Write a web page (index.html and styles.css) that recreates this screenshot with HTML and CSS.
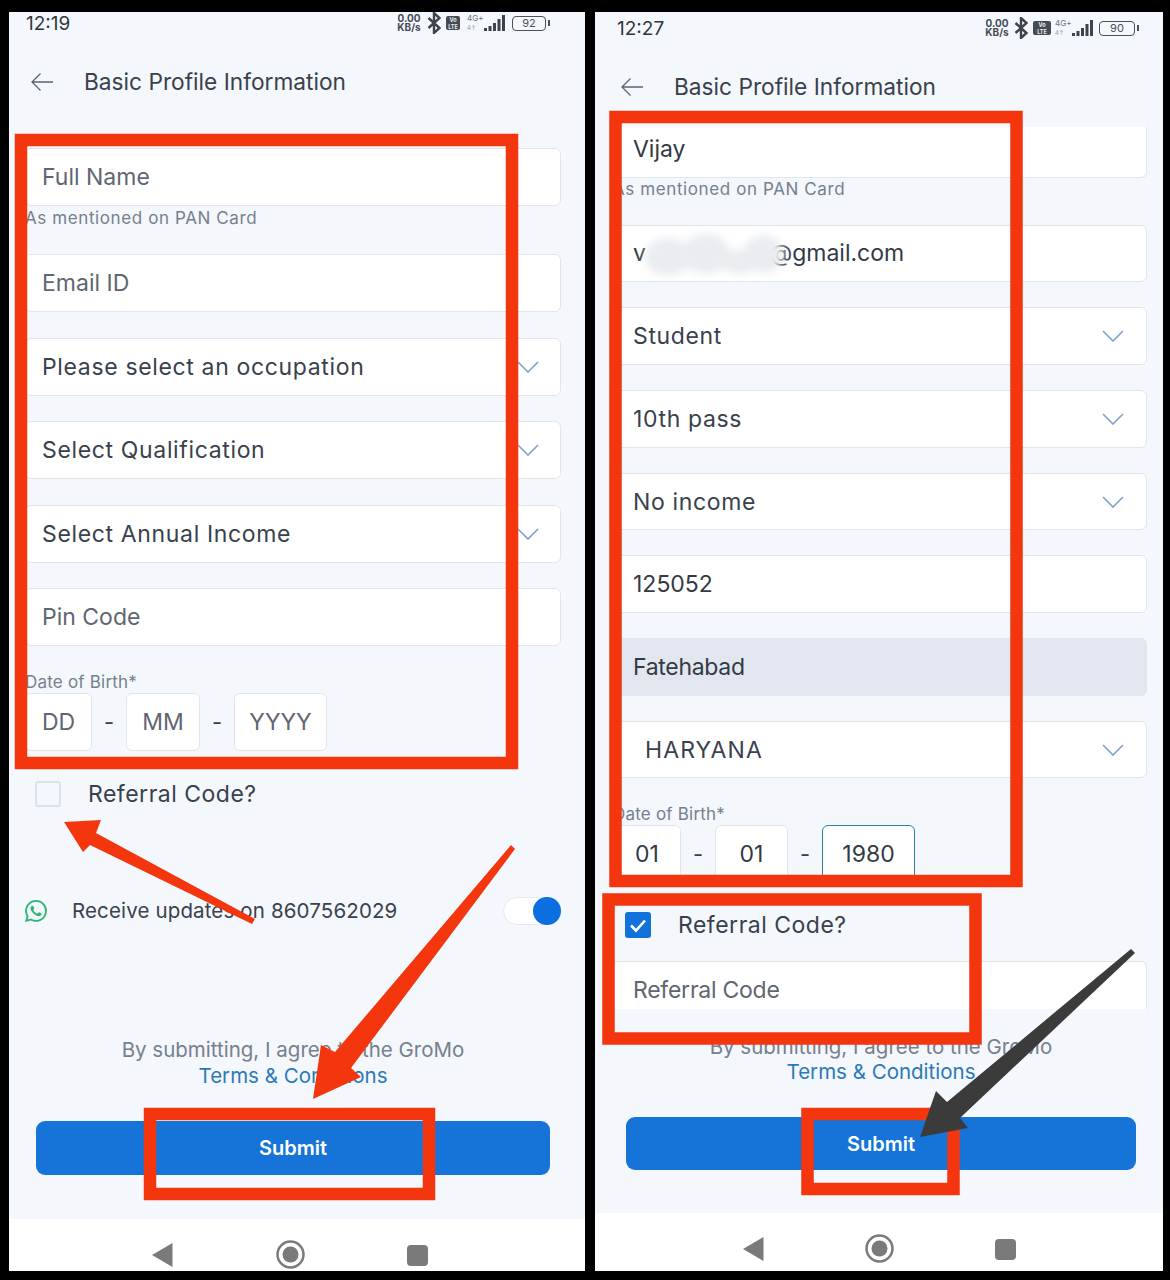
FILE: index.html
```html
<!DOCTYPE html>
<html lang="en">
<head>
<meta charset="utf-8">
<title>Basic Profile Information</title>
<link rel="stylesheet" href="styles.css">
</head>
<body>
<div class="screens">

  <section class="phone phone-a">
    <div class="status">
      <span class="time">12:19</span>
      <div class="status-icons">
        <span class="speed">0.00<br>KB/s</span>
        <svg class="bt" viewBox="0 0 14 22"><path d="M1.500 6l11 10-5.500 5V1l5.500 5-11 10"/></svg>
        <span class="volte">Vo<br>LTE</span>
        <span class="net">4G+<br><i>4↑</i></span>
        <svg class="bars" viewBox="0 0 21 16"><rect x="0" y="13" width="3" height="3"/><rect x="4.500" y="11" width="3" height="5"/><rect x="9" y="8" width="3" height="8"/><rect x="13.500" y="4" width="3" height="12"/><rect x="18" y="0" width="3" height="16"/></svg>
        <span class="battery">92</span>
      </div>
    </div>
    <header class="bar">
      <svg class="back" viewBox="0 0 24 20"><path d="M23 10H2M10.500 1.500L2 10l8.500 8.500"/></svg>
      <h1>Basic Profile Information</h1>
    </header>
    <main class="main">
      <div class="form">
        <div>
          <div class="field ph">Full Name</div>
          <div class="hint">As mentioned on PAN Card</div>
        </div>
        <div class="field ph">Email ID</div>
        <div class="field sel">Please select an occupation<svg class="chev" viewBox="0 0 22 12"><path d="M1 1l10 10L21 1"/></svg></div>
        <div class="field sel">Select Qualification<svg class="chev" viewBox="0 0 22 12"><path d="M1 1l10 10L21 1"/></svg></div>
        <div class="field sel">Select Annual Income<svg class="chev" viewBox="0 0 22 12"><path d="M1 1l10 10L21 1"/></svg></div>
        <div class="field ph">Pin Code</div>
        <div>
          <div class="dob-label">Date of Birth*</div>
          <div class="dob">
            <div class="box box-d ph">DD</div><span class="dash">-</span>
            <div class="box box-m ph">MM</div><span class="dash">-</span>
            <div class="box box-y ph">YYYY</div>
          </div>
        </div>
      </div>
      <label class="check-row">
        <span class="check"></span>
        <span>Referral Code?</span>
      </label>
      <div class="wa-row">
        <svg class="wa" viewBox="0 0 24 24"><path d="M17.472 14.382c-.297-.149-1.758-.867-2.030-.967-.273-.099-.471-.148-.670.150-.197.297-.767.966-.940 1.164-.173.199-.347.223-.644.075-.297-.150-1.255-.463-2.390-1.475-.883-.788-1.480-1.761-1.653-2.059-.173-.297-.018-.458.130-.606.134-.133.298-.347.446-.520.149-.174.198-.298.298-.497.099-.198.050-.371-.025-.520-.075-.149-.669-1.612-.916-2.207-.242-.579-.487-.500-.669-.510-.173-.008-.371-.010-.570-.010-.198 0-.520.074-.792.372-.272.297-1.040 1.016-1.040 2.479 0 1.462 1.065 2.875 1.213 3.074.149.198 2.096 3.200 5.077 4.487.709.306 1.262.489 1.694.625.712.227 1.360.195 1.871.118.571-.085 1.758-.719 2.006-1.413.248-.694.248-1.289.173-1.413-.074-.124-.272-.198-.570-.347m-5.421 7.403h-.004a9.870 9.870 0 01-5.031-1.378l-.361-.214-3.741.982.998-3.648-.235-.374a9.860 9.860 0 01-1.510-5.260c.001-5.450 4.436-9.884 9.888-9.884 2.640 0 5.122 1.030 6.988 2.898a9.825 9.825 0 012.893 6.994c-.003 5.450-4.437 9.884-9.885 9.884m8.413-18.297A11.815 11.815 0 0012.050 0C5.495 0 .160 5.335.157 11.892c0 2.096.547 4.142 1.588 5.945L.057 24l6.305-1.654a11.882 11.882 0 005.683 1.448h.005c6.554 0 11.890-5.335 11.893-11.893a11.821 11.821 0 00-3.480-8.413z"/></svg>
        <span class="wa-text">Receive updates on 8607562029</span>
        <span class="toggle"><span class="knob"></span></span>
      </div>
      <div class="foot">
        <p class="terms">By submitting, I agree to the GroMo<br><a class="link">Terms &amp; Conditions</a></p>
        <button class="submit">Submit</button>
      </div>
    </main>
    <nav class="nav">
      <svg class="nav-back" viewBox="0 0 21 24"><path d="M20.500 0v24L0 12z"/></svg>
      <svg class="nav-home" viewBox="0 0 29 29"><circle class="ring" cx="14.500" cy="14.500" r="13"/><circle cx="14.500" cy="14.500" r="8"/></svg>
      <span class="nav-square"></span>
    </nav>
  </section>

  <section class="phone phone-b">
    <div class="status">
      <span class="time">12:27</span>
      <div class="status-icons">
        <span class="speed">0.00<br>KB/s</span>
        <svg class="bt" viewBox="0 0 14 22"><path d="M1.500 6l11 10-5.500 5V1l5.500 5-11 10"/></svg>
        <span class="volte">Vo<br>LTE</span>
        <span class="net">4G+<br><i>4↑</i></span>
        <svg class="bars" viewBox="0 0 21 16"><rect x="0" y="13" width="3" height="3"/><rect x="4.500" y="11" width="3" height="5"/><rect x="9" y="8" width="3" height="8"/><rect x="13.500" y="4" width="3" height="12"/><rect x="18" y="0" width="3" height="16"/></svg>
        <span class="battery">90</span>
      </div>
    </div>
    <header class="bar">
      <svg class="back" viewBox="0 0 24 20"><path d="M23 10H2M10.500 1.500L2 10l8.500 8.500"/></svg>
      <h1>Basic Profile Information</h1>
    </header>
    <main class="main">
      <div class="form">
        <div>
          <div class="field val field-top">Vijay</div>
          <div class="hint">As mentioned on PAN Card</div>
        </div>
        <div class="field val">v<span class="redacted"></span>@gmail.com</div>
        <div class="field sel">Student<svg class="chev" viewBox="0 0 22 12"><path d="M1 1l10 10L21 1"/></svg></div>
        <div class="field sel">10th pass<svg class="chev" viewBox="0 0 22 12"><path d="M1 1l10 10L21 1"/></svg></div>
        <div class="field sel">No income<svg class="chev" viewBox="0 0 22 12"><path d="M1 1l10 10L21 1"/></svg></div>
        <div class="field val">125052</div>
        <div class="field val field-off">Fatehabad</div>
        <div class="field sel field-in">HARYANA<svg class="chev" viewBox="0 0 22 12"><path d="M1 1l10 10L21 1"/></svg></div>
        <div>
          <div class="dob-label">Date of Birth*</div>
          <div class="dob">
            <div class="box box-d val">01</div><span class="dash">-</span>
            <div class="box box-m val">01</div><span class="dash">-</span>
            <div class="box box-y val box-focus">1980</div>
          </div>
        </div>
      </div>
      <label class="check-row">
        <span class="check check-on"><svg viewBox="0 0 26 26"><path d="M6 13.500l5 5 9-10"/></svg></span>
        <span>Referral Code?</span>
      </label>
      <div class="field ph field-ref">Referral Code</div>
      <div class="foot">
        <p class="terms">By submitting, I agree to the GroMo<br><a class="link">Terms &amp; Conditions</a></p>
        <button class="submit">Submit</button>
      </div>
    </main>
    <nav class="nav">
      <svg class="nav-back" viewBox="0 0 21 24"><path d="M20.500 0v24L0 12z"/></svg>
      <svg class="nav-home" viewBox="0 0 29 29"><circle class="ring" cx="14.500" cy="14.500" r="13"/><circle cx="14.500" cy="14.500" r="8"/></svg>
      <span class="nav-square"></span>
    </nav>
  </section>
</div>

<svg class="marks" viewBox="0 0 1170 1280" aria-hidden="true">
  <defs><filter id="smear" x="-30%" y="-30%" width="160%" height="160%"><feGaussianBlur stdDeviation="4"/></filter></defs>
  <g class="smear" filter="url(#smear)">
    <ellipse cx="668" cy="257" rx="23" ry="19"/>
    <ellipse cx="706" cy="254" rx="24" ry="20"/>
    <ellipse cx="740" cy="262" rx="18" ry="12"/>
    <ellipse cx="764" cy="254" rx="20" ry="19"/>
  </g>
  <rect class="frame" x="21" y="140" width="491" height="623"/>
  <rect class="frame" x="150" y="1114" width="279" height="80"/>
  <rect class="frame" x="615.500" y="117" width="401" height="764"/>
  <rect class="frame" x="608.500" y="899.500" width="367" height="139"/>
  <rect class="frame" x="807.500" y="1114" width="146" height="75"/>
  <path class="arrow" d="M64 822L101 820L96 833L255 919L252 924L90 845L83 852Z"/>
  <path class="arrow" d="M511 845L515 849L351 1068L361 1077L313 1099L321 1045L335 1052Z"/>
  <path class="arrow-dark" d="M1131 949L1135 953L960 1118L968 1128L920 1137L936 1091L947 1102Z"/>
</svg>
</body>
</html>
```

FILE: styles.css
```css
* { box-sizing: border-box; }
html, body { margin: 0; padding: 0; }
body {
  width: 1170px;
  height: 1280px;
  background: #000;
  position: relative;
  overflow: hidden;
  font-family: "Inter", "Liberation Sans", sans-serif;
  color: #39414d;
}
.screens {
  display: flex;
  gap: 10px;
  padding: 12px 0 0 9px;
}
.phone {
  display: flex;
  flex-direction: column;
  height: 1259px;
  background: #f4f7fb;
  overflow: hidden;
}
.phone-a { width: 576px; }
.phone-b { width: 568px; }

/* status bar */
.status {
  display: flex;
  justify-content: space-between;
  align-items: center;
}
.phone-a .status { height: 22px; padding: 0 39px 0 17px; }
.phone-b .status { height: 32px; padding: 0 28px 0 22px; }
.time { font-size: 19px; color: #2f3640; }
.status-icons { display: flex; align-items: center; }
.speed {
  font-size: 10px;
  line-height: 9.500px;
  font-weight: 700;
  text-align: center;
  color: #444b55;
  width: 24px;
}
.bt { width: 14px; height: 22px; margin-left: 6px; fill: none; stroke: #3d444e; stroke-width: 2.400; }
.volte {
  width: 14px;
  height: 14px;
  margin-left: 5px;
  background: #454c56;
  color: #e8ebf0;
  border-radius: 2px;
  font-size: 5.500px;
  line-height: 6.500px;
  font-weight: 700;
  text-align: center;
  padding-top: 1px;
}
.net {
  width: 16px;
  margin-left: 7px;
  font-size: 8px;
  line-height: 9px;
  color: #6c737d;
}
.net i { font-style: normal; font-size: 6px; color: #9aa0a9; }
.bars { width: 21px; height: 16px; margin-left: 1px; fill: #3d444e; }
.battery {
  width: 34px;
  height: 15px;
  margin-left: 7px;
  border: 1.500px solid #4a515b;
  border-radius: 4px;
  font-size: 11px;
  line-height: 12px;
  text-align: center;
  color: #4a515b;
  position: relative;
}
.battery::after {
  content: "";
  position: absolute;
  right: -5px;
  top: 3px;
  width: 2px;
  height: 6px;
  background: #4a515b;
}
.phone-b .bt { margin-left: 5px; }
.phone-b .volte { width: 18px; }
.phone-b .net { margin-left: 4px; }
.phone-b .battery { width: 36px; margin-left: 6px; }

/* header */
.bar { display: flex; align-items: center; }
.phone-a .bar { height: 96px; padding-left: 21px; }
.phone-b .bar { height: 83px; padding: 3px 0 0 25px; }
.back { width: 24px; height: 20px; fill: none; stroke: #5d6571; stroke-width: 1.300; }
.bar h1 {
  margin: 0 0 2px 30px;
  font-size: 22.700px;
  font-weight: 400;
  color: #39414d;
}

/* form */
.main {
  flex: 1;
  display: flex;
  flex-direction: column;
}
.phone-a .main { padding: 18px 24px 0 16px; }
.phone-b .main { padding: 0 16px 0 18px; }
.form { display: flex; flex-direction: column; }
.phone-a .form { gap: 25.500px; }
.phone-b .form { gap: 25.200px; }
.field {
  height: 58px;
  background: #fff;
  border: 1px solid #e2e6ec;
  border-radius: 6px;
  display: flex;
  align-items: center;
  justify-content: space-between;
  font-size: 23px;
  padding: 0 21px 0 16px;
}
.phone-b .field { height: 57.500px; padding: 0 22px 0 19px; }
.phone-b .field-top { height: 51px; padding-bottom: 6px; border-top: 0; border-radius: 0 0 6px 6px; }
.field.val { justify-content: flex-start; color: #333a45; }
.ph { color: #5f6671; }
.sel { color: #39414d; letter-spacing: 0.650px; }
.phone-b .field-off { background: #e2e7ef; border-color: #e2e7ef; letter-spacing: -0.300px; }
.phone-b .field-in { padding-left: 31px; letter-spacing: 1.100px; }
.redacted { width: 124px; }
.chev { width: 22px; height: 12px; fill: none; stroke: #7fa0c8; stroke-width: 1.600; flex: none; }
.hint, .dob-label {
  font-size: 17px;
  line-height: 22px;
  letter-spacing: 0.600px;
  color: #76808e;
}
.hint { padding-top: 1px; height: 22.500px; }
.dob-label { height: 21.500px; line-height: 20px; letter-spacing: 0.200px; }
.phone-b .hint { height: 21.500px; line-height: 21px; }
.dob { display: flex; align-items: center; }
.box {
  height: 58px;
  background: #fff;
  border: 1px solid #e2e6ec;
  border-radius: 6px;
  font-size: 23px;
  display: flex;
  align-items: center;
  justify-content: center;
}
.box.ph { color: #5f6671; }
.box.val { color: #333a45; }
.dash { width: 34px; text-align: center; font-size: 22px; color: #39414d; }
.phone-a .box-d { width: 67px; }
.phone-a .box-m { width: 74px; }
.phone-a .box-y { width: 93px; }
.phone-b .box-d { width: 68px; }
.phone-b .box-m { width: 73px; }
.phone-b .box-y { width: 93px; }
.box-focus { border-color: #2f7fb5; }

/* referral */
.check-row {
  display: flex;
  align-items: center;
  gap: 27px;
  height: 26px;
  font-size: 23px;
  letter-spacing: 0.500px;
  color: #39414d;
}
.phone-a .check-row { margin: 30px 0 0 10px; }
.phone-b .check-row { margin: 29px 0 0 12px; }
.check {
  width: 26px;
  height: 26px;
  border: 2px solid #dbe2ee;
  border-radius: 3px;
  flex: none;
}
.check-on { background: #1272dc; border: 0; }
.check-on svg { display: block; width: 26px; height: 26px; fill: none; stroke: #fff; stroke-width: 2.600; }
.phone-b .field-ref {
  height: 48px;
  margin-top: 23px;
  padding-top: 8px;
  border-bottom: 0;
  border-radius: 6px 6px 0 0;
  letter-spacing: -0.250px;
}

/* whatsapp row */
.wa-row {
  display: flex;
  align-items: center;
  height: 28px;
  margin-top: 90px;
}
.wa { width: 22px; height: 22px; fill: #2bb673; flex: none; }
.wa-text {
  flex: 1;
  margin: -1px 0 0 25px;
  font-size: 20.500px;
  letter-spacing: 0.140px;
  color: #3a424e;
}
.toggle {
  width: 58px;
  height: 28px;
  background: #fff;
  border: 1px solid #e6eaf0;
  border-radius: 14px;
  display: flex;
  justify-content: flex-end;
}
.knob { width: 28px; height: 28px; margin: -1px; background: #0b6fe0; border-radius: 50%; }

/* footer */
.phone-a .foot { margin: 112px 11px 0; }
.phone-b .foot { margin: 25px 11px 0 13px; }
.terms {
  margin: 0;
  text-align: center;
  font-size: 20.500px;
  line-height: 26px;
  color: #76808e;
}
.phone-b .terms { line-height: 25px; }
.link { color: #2a7ab8; }
.submit {
  display: block;
  width: 100%;
  height: 54px;
  margin-top: 32px;
  border: 0;
  border-radius: 9px;
  background: #1674d8;
  color: #fff;
  font: 600 20px "Inter", "Liberation Sans", sans-serif;
}
.phone-b .submit { height: 53px; margin-top: 33px; }

/* nav */
.nav {
  display: flex;
  align-items: center;
  background: #fff;
  padding-top: 21px;
}
.phone-a .nav { height: 52px; padding-left: 143px; gap: 102.500px; align-items: flex-start; }
.phone-b .nav { height: 58px; padding-left: 148px; gap: 101px; align-items: flex-start; }
.nav-back { width: 21px; height: 24px; margin-top: 3px; fill: #7a7a7a; }
.nav-home { width: 29px; height: 29px; fill: #7a7a7a; }
.nav-home .ring { fill: none; stroke: #7a7a7a; stroke-width: 2.500; }
.nav-square { width: 21px; height: 21px; margin-top: 5px; background: #7a7a7a; border-radius: 4px; }

/* annotations drawn over the screenshots */
.marks {
  position: absolute;
  left: 0;
  top: 0;
  width: 1170px;
  height: 1280px;
  pointer-events: none;
}
.frame { fill: none; stroke: #f4360f; stroke-width: 12.500; }
.arrow { fill: #f4360f; }
.arrow-dark { fill: #3b3b3b; }
.smear { fill: #e9ecf0; }
```
